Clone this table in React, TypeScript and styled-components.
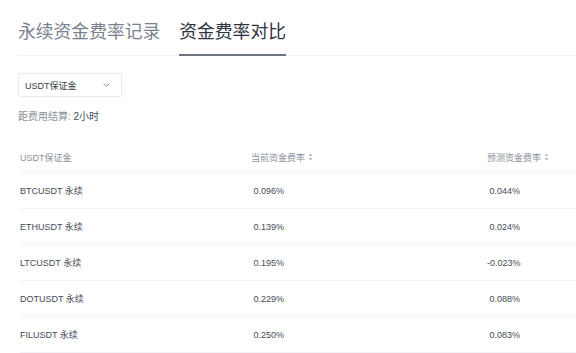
import React from 'react';
import styled, { createGlobalStyle } from 'styled-components';

const GlobalStyle = createGlobalStyle`
  html, body { margin: 0; padding: 0; background: #fff; }
  body {
    font-family: "Liberation Sans", "Noto Sans CJK SC", sans-serif;
    overflow: hidden;
  }
`;

const Page = styled.div`
  width: 576px;
  height: 353px;
  padding: 20px 0 0 18px;
  box-sizing: border-box;
  overflow: hidden;
`;

const TabBar = styled.div`
  display: flex;
  gap: 19px;
  border-bottom: 1px solid #f0f1f4;
`;

const Tab = styled.div<{ $active?: boolean }>`
  font-size: 17.8px;
  line-height: 24px;
  padding-bottom: 10px;
  margin-bottom: -1px;
  color: ${p => (p.$active ? '#2f3340' : '#7c8190')};
  border-bottom: 2px solid ${p => (p.$active ? '#6c727f' : 'transparent')};
`;

const Select = styled.div`
  margin-top: 17px;
  width: 104px;
  height: 24px;
  box-sizing: border-box;
  border: 1px solid #e8eaee;
  border-radius: 2px;
  display: flex;
  align-items: center;
  justify-content: space-between;
  padding: 0 11px 0 6px;
  font-size: 9px;
  color: #3a3f4a;
`;

const Settle = styled.div`
  margin-top: 13px;
  font-size: 10px;
  line-height: 14px;
  color: #8a8f9b;
  span { color: #454a56; }
`;

const Table = styled.div`
  margin: 18px 0 0 2px;
`;

const Row = styled.div<{ $head?: boolean }>`
  display: grid;
  grid-template-columns: 231px 236px 1fr;
  align-items: center;
  box-sizing: border-box;
  height: ${p => (p.$head ? '31px' : '36px')};
  border-bottom: 1px solid #f1f2f6;
  font-size: 9px;
  color: ${p => (p.$head ? '#8c919d' : '#464b57')};
`;

const HeadCell = styled.div`
  display: flex;
  align-items: center;
  gap: 3px;
`;

const Value = styled.span`
  display: inline-block;
  width: 33px;
  text-align: right;
`;

const Sort = () => (
  <svg width="5" height="8" viewBox="0 0 5 8">
    <path d="M2.5 0.5L4.5 3H0.5Z" fill="#b3b7c0" />
    <path d="M2.5 7.5L4.5 5H0.5Z" fill="#b3b7c0" />
  </svg>
);

const Chevron = () => (
  <svg width="7" height="4" viewBox="0 0 7 4">
    <path d="M0.5 0.5L3.5 3.3L6.5 0.5" fill="none" stroke="#8a92a6" strokeWidth="1" />
  </svg>
);

const rows = [
  ['BTCUSDT 永续', '0.096%', '0.044%'],
  ['ETHUSDT 永续', '0.139%', '0.024%'],
  ['LTCUSDT 永续', '0.195%', '-0.023%'],
  ['DOTUSDT 永续', '0.229%', '0.088%'],
  ['FILUSDT 永续', '0.250%', '0.083%'],
];

export default function App() {
  return (
    <Page>
      <GlobalStyle />
      <TabBar>
        <Tab>永续资金费率记录</Tab>
        <Tab $active>资金费率对比</Tab>
      </TabBar>
      <Select>
        USDT保证金
        <Chevron />
      </Select>
      <Settle>
        距费用结算: <span>2小时</span>
      </Settle>
      <Table>
        <Row $head>
          <HeadCell>USDT保证金</HeadCell>
          <HeadCell>当前资金费率 <Sort /></HeadCell>
          <HeadCell>预测资金费率 <Sort /></HeadCell>
        </Row>
        {rows.map(r => (
          <Row key={r[0]}>
            <div>{r[0]}</div>
            <div><Value>{r[1]}</Value></div>
            <div><Value>{r[2]}</Value></div>
          </Row>
        ))}
      </Table>
    </Page>
  );
}
